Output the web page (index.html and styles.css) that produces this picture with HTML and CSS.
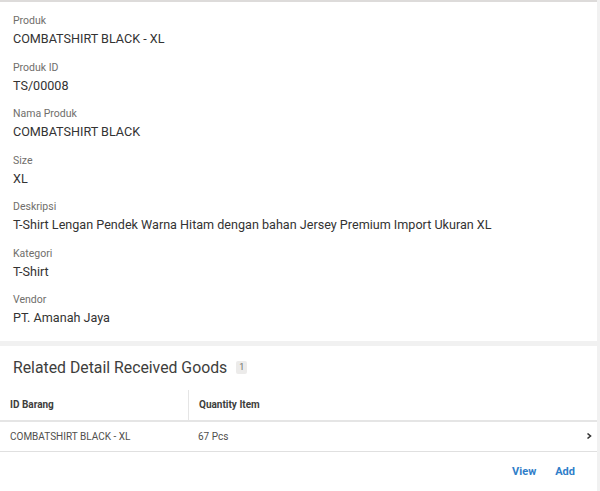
FILE: index.html
```html
<!DOCTYPE html>
<html lang="en">
<head>
  <meta charset="UTF-8" />
  <meta name="viewport" content="width=device-width, initial-scale=1.0" />
  <title>Produk Detail</title>
  <link rel="stylesheet" href="styles.css">
</head>
<body>
  <div class="card details">
    <div class="field">
      <div class="label">Produk</div>
      <div class="value">COMBATSHIRT BLACK - XL</div>
    </div>
    <div class="field">
      <div class="label">Produk ID</div>
      <div class="value">TS/00008</div>
    </div>
    <div class="field">
      <div class="label">Nama Produk</div>
      <div class="value">COMBATSHIRT BLACK</div>
    </div>
    <div class="field">
      <div class="label">Size</div>
      <div class="value">XL</div>
    </div>
    <div class="field">
      <div class="label">Deskripsi</div>
      <div class="value">T-Shirt Lengan Pendek Warna Hitam dengan bahan Jersey Premium Import Ukuran XL</div>
    </div>
    <div class="field">
      <div class="label">Kategori</div>
      <div class="value">T-Shirt</div>
    </div>
    <div class="field">
      <div class="label">Vendor</div>
      <div class="value">PT. Amanah Jaya</div>
    </div>
  </div>

  <div class="card related">
    <div class="related-header">
      <span class="related-title">Related Detail Received Goods</span>
      <span class="badge">1</span>
    </div>
    <div class="table">
      <div class="table-head">
        <div class="col col-id">ID Barang</div>
        <div class="col col-qty">Quantity Item</div>
      </div>
      <div class="table-row">
        <div class="col col-id">COMBATSHIRT BLACK - XL</div>
        <div class="col col-qty">67 Pcs</div>
        <svg class="chevron" width="8" height="8" viewBox="0 0 8 8"><path d="M2.5 1.5 L5.5 4 L2.5 6.5" fill="none" stroke="#333" stroke-width="1.6"/></svg>
      </div>
    </div>
    <div class="related-actions">
      <a href="#">View</a>
      <a href="#">Add</a>
    </div>
  </div>
</body>
</html>
```

FILE: styles.css
```css
body {
  margin: 0;
  font-family: Roboto, 'Noto Sans', sans-serif;
  background-color: #f1f1f1;
  color: #3e3e3c;
}
.card {
  background-color: #fff;
  width: 597px;
}
.details {
  border-top: 2px solid #dddbda;
  padding: 11px 13px 2px;
  box-sizing: border-box;
  margin-bottom: 5px;
}
.field {
  margin-bottom: 10.5px;
}
.label {
  font-size: 10.5px;
  line-height: 16px;
  color: #706e6b;
}
.value {
  font-size: 12.6px;
  line-height: 20px;
  color: #333;
}
.related-header {
  height: 44px;
  display: flex;
  align-items: center;
  padding-left: 13px;
}
.related-title {
  font-size: 15.8px;
  color: #3e3e3c;
}
.badge {
  margin-left: 9px;
  font-size: 9px;
  background-color: #ecebea;
  color: #706e6b;
  padding: 1px 3px;
  border-radius: 2px;
  line-height: 11px;
}
.table-head,
.table-row {
  display: flex;
  align-items: center;
  font-size: 10px;
}
.table-head {
  height: 30px;
  border-bottom: 2px solid #e5e5e5;
  font-weight: bold;
  color: #3e3e3c;
}
.table-head .col-id {
  border-right: 1px solid #e5e5e5;
  height: 30px;
  line-height: 29px;
}
.table-row {
  height: 29px;
  border-bottom: 1px solid #e0e0e0;
  color: #514f4d;
}
.col-id {
  width: 178px;
  padding-left: 10px;
}
.col-qty {
  flex: 1;
  padding-left: 10px;
}
.chevron {
  margin-right: 4px;
}
.related-actions {
  height: 40px;
  display: flex;
  justify-content: flex-end;
  align-items: center;
  gap: 19px;
  padding-right: 22px;
}
.related-actions a {
  font-size: 11px;
  font-weight: bold;
  color: #2f7ec9;
  text-decoration: none;
}
```
